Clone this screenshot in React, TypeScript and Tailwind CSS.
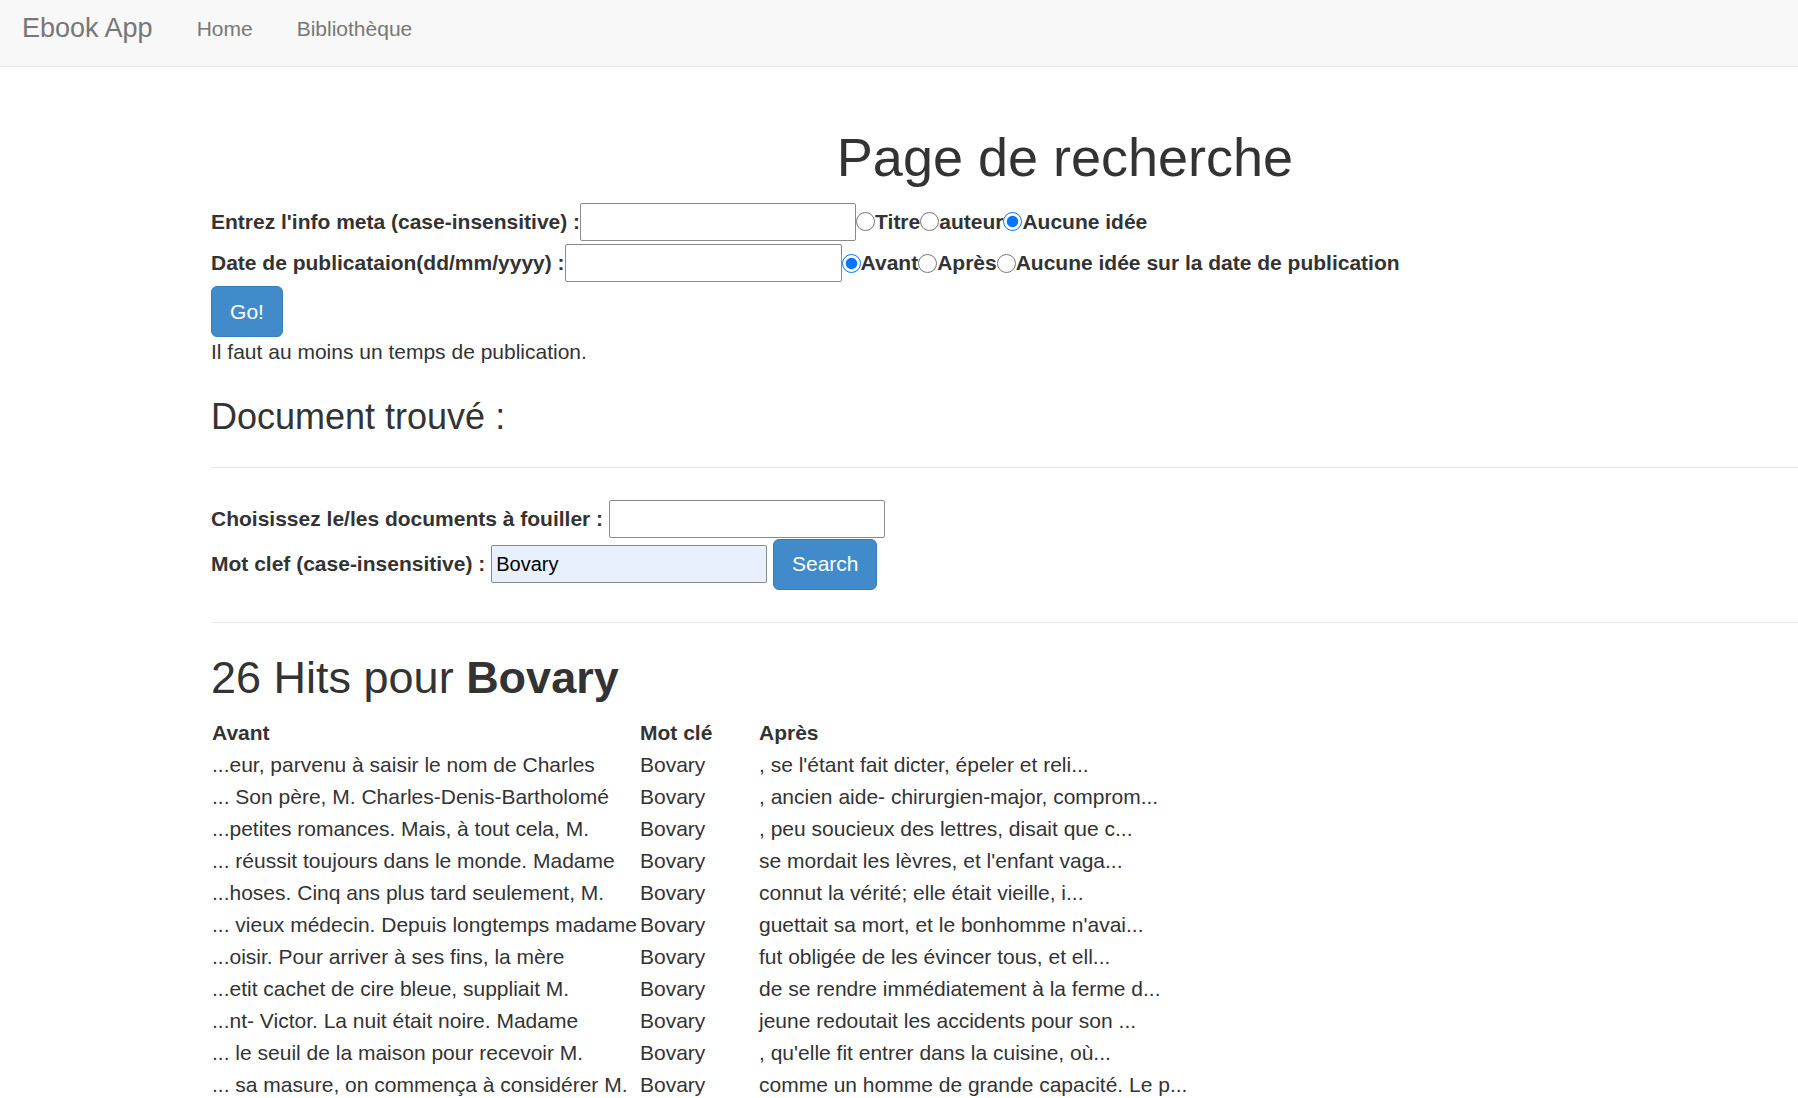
import React from "react";

const hits: [string, string][] = [
  ["...eur, parvenu à saisir le nom de Charles", ", se l'étant fait dicter, épeler et reli..."],
  ["... Son père, M. Charles-Denis-Bartholomé", ", ancien aide- chirurgien-major, comprom..."],
  ["...petites romances. Mais, à tout cela, M.", ", peu soucieux des lettres, disait que c..."],
  ["... réussit toujours dans le monde. Madame", "se mordait les lèvres, et l'enfant vaga..."],
  ["...hoses. Cinq ans plus tard seulement, M.", "connut la vérité; elle était vieille, i..."],
  ["... vieux médecin. Depuis longtemps madame", "guettait sa mort, et le bonhomme n'avai..."],
  ["...oisir. Pour arriver à ses fins, la mère", "fut obligée de les évincer tous, et ell..."],
  ["...etit cachet de cire bleue, suppliait M.", "de se rendre immédiatement à la ferme d..."],
  ["...nt- Victor. La nuit était noire. Madame", "jeune redoutait les accidents pour son ..."],
  ["... le seuil de la maison pour recevoir M.", ", qu'elle fit entrer dans la cuisine, où..."],
  ["... sa masure, on commença à considérer M.", "comme un homme de grande capacité. Le p..."],
];

function TextInput({ value, className = "" }: { value?: string; className?: string }) {
  return (
    <input
      type="text"
      defaultValue={value}
      className={
        "h-[38px] w-[276px] rounded-[2px] border border-[#8a8a8a] px-[4px] font-['Liberation_Sans',Arial,sans-serif] text-[20px] font-normal text-black outline-none " +
        className
      }
    />
  );
}

function Radio({ name, checked }: { name: string; checked?: boolean }) {
  return <input type="radio" name={name} defaultChecked={checked} className="m-0 h-[19px] w-[19px] shrink-0" />;
}

export default function App() {
  return (
    <div className="min-h-screen w-full overflow-hidden bg-white font-['Liberation_Sans',Arial,sans-serif] text-[#333]">
      <nav className="flex h-[67px] items-start border-b border-[#e7e7e7] bg-[#f8f8f8]">
        <a className="pl-[22px] pr-[22px] text-[27px] leading-[57px] text-[#777]">Ebook App</a>
        <a className="px-[22px] text-[21px] leading-[57px] text-[#777]">Home</a>
        <a className="px-[22px] text-[21px] leading-[57px] text-[#777]">Bibliothèque</a>
      </nav>

      <div className="ml-[211px] w-[1708px]">
        <h1 className="mt-[61px] h-[59px] text-center text-[54px] leading-[59px] font-normal">Page de recherche</h1>

        <div className="mt-[14px] flex h-[41px] items-center text-[21px] font-bold">
          <span>Entrez l'info meta (case-insensitive) :</span>
          <TextInput className="w-[275px]" />
          <Radio name="meta" />
          <span>Titre</span>
          <Radio name="meta" />
          <span>auteur</span>
          <Radio name="meta" checked />
          <span>Aucune idée</span>
        </div>
        <div className="flex h-[42px] items-center text-[21px] font-bold">
          <span>Date de publicataion(dd/mm/yyyy) :</span>
          <TextInput className="w-[277px]" />
          <Radio name="date" checked />
          <span>Avant</span>
          <Radio name="date" />
          <span>Après</span>
          <Radio name="date" />
          <span>Aucune idée sur la date de publication</span>
        </div>
        <button className="mt-[2px] h-[51px] w-[72px] rounded-[6px] border border-[#357ebd] bg-[#428bca] text-[21px] text-white">
          Go!
        </button>
        <p className="h-[30px] text-[21px] leading-[30px]">Il faut au moins un temps de publication.</p>

        <h3 className="mt-[30px] h-[40px] text-[36px] leading-[40px]">Document trouvé :</h3>
        <div className="mt-[30px] h-px bg-[#e8e8e8]" />

        <div className="mt-[30px] flex h-[41px] items-center text-[21px] font-bold">
          <span>Choisissez le/les documents à fouiller :</span>
          <TextInput className="ml-[6px] w-[276px]" />
        </div>
        <div className="flex h-[50px] items-center text-[21px] font-bold">
          <span>Mot clef (case-insensitive) :</span>
          <TextInput value="Bovary" className="ml-[6px] w-[276px] bg-[#e8f0fe]" />
          <button className="ml-[6px] h-[51px] w-[104px] rounded-[6px] border border-[#357ebd] bg-[#428bca] text-[21px] font-normal text-white">
            Search
          </button>
        </div>
        <div className="mt-[33px] h-px bg-[#e8e8e8]" />

        <h2 className="mt-[30px] h-[50px] text-[45px] leading-[50px]">
          26 Hits pour <b>Bovary</b>
        </h2>

        <table className="mt-[14px] border-collapse text-[21px] leading-[30px]">
          <thead>
            <tr>
              <th className="w-[428px] p-px text-left font-bold">Avant</th>
              <th className="w-[119px] p-px text-left font-bold">Mot clé</th>
              <th className="p-px text-left font-bold">Après</th>
            </tr>
          </thead>
          <tbody>
            {hits.map(([before, after], i) => (
              <tr key={i}>
                <td className="whitespace-nowrap p-px">{before}</td>
                <td className="whitespace-nowrap p-px">Bovary</td>
                <td className="whitespace-nowrap p-px">{after}</td>
              </tr>
            ))}
          </tbody>
        </table>
      </div>
    </div>
  );
}
